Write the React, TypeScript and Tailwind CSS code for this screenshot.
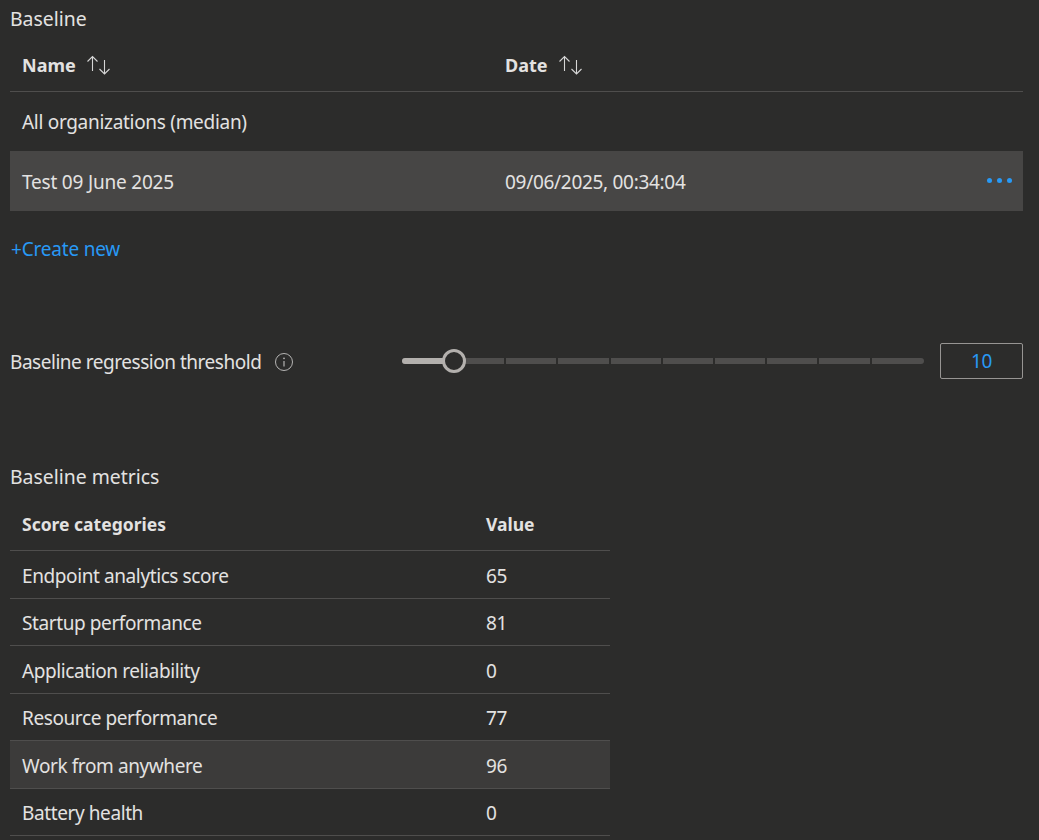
import React from "react";

function SortIcon() {
  return (
    <svg width="26" height="20" viewBox="0 0 26 20" fill="none" stroke="#d6d6d6" strokeWidth="1.1" className="ml-[10px]">
      <path d="M6.5 16V1.5M1.5 6.5l5-5 5 5" />
      <path d="M18.5 5v14M13.5 14l5 5 5-5" />
    </svg>
  );
}

const rows: [string, string][] = [
  ["Endpoint analytics score", "65"],
  ["Startup performance", "81"],
  ["Application reliability", "0"],
  ["Resource performance", "77"],
  ["Work from anywhere", "96"],
  ["Battery health", "0"],
];

const ticks = [0, 1, 2, 3, 4, 5, 6, 7, 8];

export default function App() {
  return (
    <div className="h-[840px] overflow-hidden bg-[#2c2c2b] pl-[10px] pr-[16px] text-[#e3e2e1] font-['Noto_Sans',sans-serif] text-[19px] tracking-[-0.3px]">
      <div className="h-[38px] text-[19.4px] leading-[38px] tracking-normal">Baseline</div>
      <div className="flex h-[54px] items-center border-b border-[#4f4e4d] pl-[12px] pt-[1px] text-[18px] font-bold tracking-normal">
        <div className="flex w-[483px] items-center">Name<SortIcon /></div>
        <div className="flex items-center">Date<SortIcon /></div>
      </div>
      <div className="flex h-[59px] items-center pl-[12px] pt-[2px]">All organizations (median)</div>
      <div className="flex h-[60px] items-center bg-[#474645] pl-[12px] pt-[2px]">
        <div className="w-[483px] tracking-[-0.2px]">Test 09 June 2025</div>
        <div>09/06/2025, 00:34:04</div>
        <div className="ml-auto mr-[11px] -mt-[3px] flex gap-[5px]">
          <span className="size-[5px] rounded-full bg-[#2899f5]" />
          <span className="size-[5px] rounded-full bg-[#2899f5]" />
          <span className="size-[5px] rounded-full bg-[#2899f5]" />
        </div>
      </div>
      <div className="mt-[23px] h-[30px] pl-[1px] leading-[30px] tracking-[-0.2px] text-[#2899f5]">+Create new</div>

      <div className="mt-[79px] flex h-[36px] items-center">
        <div className="flex w-[392px] items-center pt-[2px]">
          <span className="tracking-[-0.47px]">Baseline regression threshold</span>
          <svg width="20" height="20" viewBox="0 0 20 20" fill="none" className="ml-[13px]">
            <circle cx="10" cy="10" r="8.5" stroke="#b5b4b3" strokeWidth="1" />
            <path d="M10 9v5.5" stroke="#b5b4b3" strokeWidth="1.2" />
            <circle cx="10" cy="6.3" r="0.9" fill="#b5b4b3" />
          </svg>
        </div>
        <div className="relative flex h-[6px] w-[522px] overflow-hidden rounded-full bg-[#4f4e4d]">
          <div className="h-full w-[52px] bg-[#b3b0ad]" />
          {ticks.map((t) => (
            <div key={t} className={`h-full w-[52.2px] ${t < 8 ? "border-r-2 border-[#2c2c2b]" : ""}`} />
          ))}
        </div>
        <div className="relative -ml-[522px] h-[24px] w-[522px]">
          <div className="absolute left-[40px] top-0 size-[24px] rounded-full border-[3px] border-[#b3b0ad] bg-[#2c2c2b]" />
        </div>
        <div className="ml-[16px] flex h-[36px] w-[83px] items-center justify-center rounded-[2px] border border-[#979593] text-[#2899f5]">10</div>
      </div>

      <div className="mt-[79px] h-[38px] text-[19.4px] leading-[38px] tracking-normal">Baseline metrics</div>
      <div className="mt-[1px] w-[600px]">
        <div className="flex h-[54px] items-center border-b border-[#4f4e4d] pl-[12px] pt-[1px] text-[17.5px] font-bold tracking-normal">
          <div className="w-[464px]">Score categories</div>
          <div>Value</div>
        </div>
        {rows.map(([name, value]) => (
          <div
            key={name}
            className={`flex h-[47.5px] items-center border-b border-[#4f4e4d] pl-[12px] pt-[3px] ${name === "Work from anywhere" ? "bg-[#3c3b3a]" : ""}`}
          >
            <div className="w-[464px] tracking-[-0.4px]">{name}</div>
            <div>{value}</div>
          </div>
        ))}
      </div>
    </div>
  );
}
